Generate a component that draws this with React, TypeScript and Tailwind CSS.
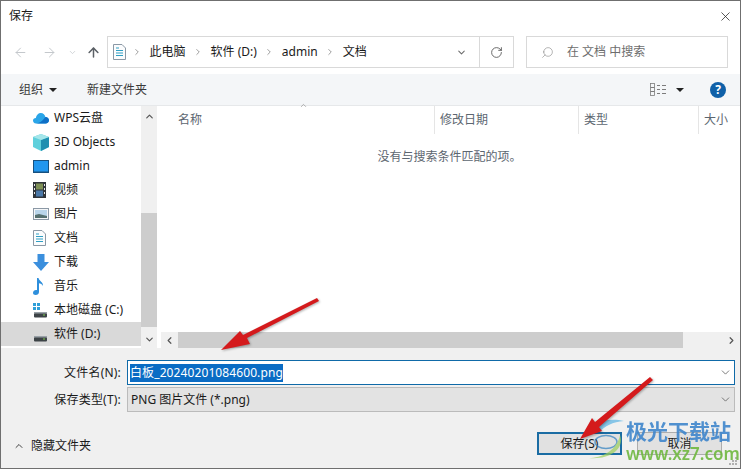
import { ArrowLeft, ArrowRight, ArrowUp, ChevronDown, ChevronLeft, ChevronRight, ChevronUp, RotateCw, Search, X } from "lucide-react";

const font = "font-['Noto_Sans','Noto_Sans_CJK_SC',sans-serif]";

function Cloud() {
  return (
    <svg width="16" height="12" viewBox="0 0 16 12">
      <path d="M3 11.5C1 11.5 0 10 0 8.500C0 7 1.200 6 2.800 6C3.300 3 5.300 1 7.800 1C10.300 1 12 2.800 12.400 5C14.500 5.200 16 6.500 16 8.300C16 10.300 14.500 11.500 12.500 11.500Z" fill="#2aa5e8" />
      <path d="M3 11.500C6 11.500 9 9.500 12.400 5C14.500 5.200 16 6.500 16 8.300C16 10.300 14.500 11.500 12.500 11.500Z" fill="#0f6fc6" />
    </svg>
  );
}

function Cube() {
  return (
    <svg width="16" height="17" viewBox="0 0 16 17">
      <path d="M8 0L16 3V13L8 17L0 13V3Z" fill="#5fd0dc" />
      <path d="M8 6L16 3V13L8 17Z" fill="#1f8fb0" />
      <path d="M8 0L16 3L8 6L0 3Z" fill="#a5e6ea" />
    </svg>
  );
}

function Desktop() {
  return (
    <svg width="16" height="13" viewBox="0 0 16 13">
      <rect x="0" y="0" width="16" height="13" fill="#17507f" />
      <rect x="1" y="1" width="14" height="10.500" fill="#2196ee" />
    </svg>
  );
}

function Film() {
  return (
    <svg width="13" height="16" viewBox="0 0 13 16">
      <rect width="13" height="16" fill="#30353a" />
      <rect x="3" y="1.500" width="7" height="6" fill="#7d8f55" />
      <rect x="3" y="8.500" width="7" height="6" fill="#4a78a8" />
      <path d="M1 2h1v2H1zM1 6h1v2H1zM1 10h1v2H1zM11 2h1v2h-1zM11 6h1v2h-1zM11 10h1v2h-1z" fill="#e8e8e8" />
    </svg>
  );
}

function Picture() {
  return (
    <svg width="16" height="12" viewBox="0 0 16 12">
      <rect x="0.500" y="0.500" width="15" height="11" fill="#f4f6f8" stroke="#8b98a5" />
      <rect x="2" y="2" width="12" height="8" fill="#b9d5ea" />
      <path d="M2 7L6 6L14 8V10H2Z" fill="#55706f" />
    </svg>
  );
}

function Doc() {
  return (
    <svg width="13" height="16" viewBox="0 0 13 16">
      <path d="M0.500 0.500H9L12.500 4V15.500H0.500Z" fill="#fbfcfd" stroke="#8a98a5" />
      <path d="M3 4H6M3 6.500H10M3 9H10M3 11.500H10" stroke="#2f9fc4" strokeWidth="1" />
    </svg>
  );
}

function Download() {
  return (
    <svg width="16" height="17" viewBox="0 0 16 17">
      <path d="M4.500 0H11.500V8H16L8 17L0 8H4.500Z" fill="#3b8fdd" />
    </svg>
  );
}

function Music() {
  return (
    <svg width="11" height="17" viewBox="0 0 11 17">
      <path d="M4 0H5.500C6 3 10.500 4 10 8C9 6 7.500 5.500 6 5.200V14C6 15.800 4.500 17 2.700 17C1 17 0 16 0 14.700C0 13.200 1.500 12 3 12C3.500 12 4 12.100 4 12.200Z" fill="#2e8fdc" />
    </svg>
  );
}

function Drive({ windows }: { windows?: boolean }) {
  return (
    <svg width="15" height="15" viewBox="0 0 15 15">
      {windows && <path d="M0 0h3v3H0zM4 0h3v3H4zM0 4h3v3H0zM4 4h3v3H4z" fill="#2f9fd8" />}
      <rect x="1" y="10" width="13" height="4.500" rx="1" fill="#3d4347" />
      <rect x="1" y="9" width="13" height="1.500" fill="#9aa2a8" />
      <rect x="10" y="11.500" width="2" height="1" fill="#7fd04f" />
    </svg>
  );
}

function Arrow({ d }: { d: string }) {
  return (
    <svg className="pointer-events-none absolute -left-px -top-px drop-shadow-[1px_1px_1px_rgba(0,0,0,0.3)]" width="741" height="469" viewBox="0 0 741 469">
      <path d={d} fill="#d41a1c" />
    </svg>
  );
}

const navItems = [
  { icon: <Cloud />, label: "WPS云盘" },
  { icon: <Cube />, label: "3D Objects" },
  { icon: <Desktop />, label: "admin" },
  { icon: <Film />, label: "视频" },
  { icon: <Picture />, label: "图片" },
  { icon: <Doc />, label: "文档" },
  { icon: <Download />, label: "下载" },
  { icon: <Music />, label: "音乐" },
  { icon: <Drive windows />, label: "本地磁盘 (C:)" },
  { icon: <Drive />, label: "软件 (D:)", active: true },
];

function Crumb({ label }: { label: string }) {
  return (
    <>
      <ChevronRight size={10} strokeWidth={2} className="mx-[6px] text-[#8a8a8a]" />
      <span className="px-[1.5px]">{label}</span>
    </>
  );
}

export default function App() {
  return (
    <div className={`relative flex h-[469px] w-[741px] flex-col overflow-hidden border border-[#6f6f6f] bg-white text-[12px] text-[#1a1a1a] ${font}`}>
      {/* title */}
      <div className="flex h-[29px] shrink-0 items-center justify-between pl-[8px] pr-[7px] pt-[1px]">
        <span>保存</span>
        <X size={15} strokeWidth={1.2} className="text-[#222]" />
      </div>

      {/* nav + address */}
      <div className="flex h-[44px] shrink-0 items-center pl-[12px] pr-[12px]">
        <ArrowLeft size={15} strokeWidth={1.6} className="text-[#c4c8cc]" />
        <ArrowRight size={15} strokeWidth={1.6} className="ml-[14px] text-[#c4c8cc]" />
        <ChevronDown size={9} strokeWidth={2} className="ml-[11px] text-[#c4c8cc]" />
        <ArrowUp size={15} strokeWidth={2.4} className="ml-[9px] text-[#5b6066]" />
        <div className="ml-[6px] flex h-[32px] w-[372px] items-center border border-r-0 border-[#d9d9d9] pl-[5px]">
          <Doc />
          <Crumb label="此电脑" />
          <Crumb label="软件 (D:)" />
          <Crumb label="admin" />
          <Crumb label="文档" />
          <ChevronDown size={11} strokeWidth={2.2} className="ml-auto mr-[12px] text-[#6a6a6a]" />
        </div>
        <div className="flex h-[32px] w-[35px] items-center justify-center border border-[#d9d9d9]">
          <RotateCw size={13} strokeWidth={1.6} className="text-[#555]" />
        </div>
        <div className="ml-[12px] flex h-[32px] w-[202px] items-center border border-[#d9d9d9] pl-[14px] text-[#6d6d6d]">
          <Search size={13} strokeWidth={1} className="-scale-x-100 text-[#777]" />
          <span className="ml-[13px]">在 文档 中搜索</span>
        </div>
      </div>

      {/* toolbar */}
      <div className="flex h-[32px] shrink-0 items-center border-b border-[#e6e8ea] bg-[#f4f6f8] pl-[18px] pr-[14px] text-[#3a3a3a]">
        <span>组织</span>
        <span className="ml-[6px] h-0 w-0 border-x-[4px] border-t-[4px] border-x-transparent border-t-[#222]" />
        <span className="ml-[30px]">新建文件夹</span>
        <svg className="ml-auto" width="16" height="13" viewBox="0 0 16 13" fill="none" stroke="#7c7c7c">
          <rect x="0.500" y="0.500" width="4" height="12" strokeWidth="0.800" />
          <path d="M0.500 4.500H4.500M0.500 8.500H4.500M7 2.500H10M12 2.500H16M7 6.500H10M12 6.500H16M7 10.500H10M12 10.500H16" strokeWidth="1" />
        </svg>
        <span className="ml-[10px] h-0 w-0 border-x-[4px] border-t-[4px] border-x-transparent border-t-[#222]" />
        <span className="ml-[26px] flex h-[16px] w-[16px] items-center justify-center rounded-full bg-[#0f60a8] text-[12px] font-bold leading-none text-white">?</span>
      </div>

      {/* browser */}
      <div className="flex h-[242px] shrink-0">
        <div className="flex w-[157px] shrink-0">
          <div className="w-[140px] shrink-0">
            {navItems.map((item) => (
              <div key={item.label} className={`flex h-[24px] items-center ${item.active ? "bg-[#d9d9d9]" : ""}`}>
                <span className="ml-[32px] flex w-[21px] shrink-0 items-center">{item.icon}</span>
                <span>{item.label}</span>
              </div>
            ))}
          </div>
          <div className="flex w-[16px] flex-col items-center bg-[#f0f0f0]">
            <ChevronUp size={11} strokeWidth={2.6} className="mt-[5px] shrink-0 text-[#555]" />
            <div className="mt-[91px] h-[114px] w-full bg-[#cdcdcd]" />
            <ChevronDown size={11} strokeWidth={2.6} className="mt-[7px] shrink-0 text-[#555]" />
          </div>
        </div>
        <div className="relative flex min-w-0 flex-1 flex-col pl-[3px]">
          <div className="flex h-[28px] shrink-0 items-center text-[#5c6670]">
            <div className="relative w-[273px] pl-[17px]">
              名称
              <ChevronUp size={9} strokeWidth={1.4} className="absolute left-[138px] top-[-10px] text-[#777]" />
            </div>
            <div className="flex h-[28px] w-[144px] items-center border-l border-[#e5e5e5] pl-[5px]">修改日期</div>
            <div className="flex h-[28px] w-[120px] items-center border-l border-[#e5e5e5] pl-[5px]">类型</div>
            <div className="flex h-[28px] flex-1 items-center border-l border-[#e5e5e5] pl-[5px]">大小</div>
          </div>
          <div className="mt-[14px] flex-1 pr-[2px] text-center text-[#5c6670]">没有与搜索条件匹配的项。</div>
          <div className="flex h-[16px] shrink-0 items-center bg-[#f0f0f0]">
            <ChevronLeft size={11} strokeWidth={2.6} className="ml-[3px] text-[#555]" />
            <div className="ml-[3px] h-full w-[505px] bg-[#cdcdcd]" />
            <ChevronRight size={11} strokeWidth={2.6} className="ml-auto mr-[3px] text-[#555]" />
          </div>
        </div>
      </div>

      {/* file name + buttons */}
      <div className="flex flex-1 flex-col bg-[#f0f0f0]">
        <div className="mt-[12px] flex items-center">
          <span className="w-[120px] text-right tracking-[0.2px]">文件名(N):</span>
          <div className="ml-[6px] flex h-[25px] w-[608px] items-center border border-[#0f6aa8] bg-white pl-[2px]">
            <span className="bg-[#0a6cc4] leading-[18px] tracking-[0.1px] text-white">白板_20240201084600.png</span>
            <ChevronDown size={13} strokeWidth={1.4} className="ml-auto mr-[2px] text-[#555]" />
          </div>
        </div>
        <div className="mt-[2px] flex items-center">
          <span className="w-[120px] text-right tracking-[0.2px]">保存类型(T):</span>
          <div className="ml-[6px] flex h-[25px] w-[608px] items-center border border-[#bbb] bg-[#e3e3e3] pl-[3px]">
            <span>PNG 图片文件 (*.png)</span>
            <ChevronDown size={13} strokeWidth={1.4} className="ml-auto mr-[2px] text-[#555]" />
          </div>
        </div>
        <div className="mt-[20px] flex pr-[18px]">
          <div className="mt-[4px] flex items-center">
            <ChevronUp size={12} strokeWidth={2} className="ml-[12px] text-[#444]" />
            <span className="ml-[6px]">隐藏文件夹</span>
          </div>
          <div className="ml-auto flex h-[23px] w-[85px] items-center justify-center border-2 border-[#1a6ca3] bg-[#e1e1e1]">保存(S)</div>
          <div className="ml-[15px] flex h-[23px] w-[85px] items-center justify-center border border-[#adadad] bg-[#e1e1e1]">取消</div>
        </div>
      </div>

      {/* size grip */}
      <svg className="absolute bottom-[2px] right-[2px]" width="9" height="9" viewBox="0 0 9 9" fill="#b0b0b0">
        <path d="M6 0h2v2H6zM3 3h2v2H3zM6 3h2v2H6zM0 6h2v2H0zM3 6h2v2H3zM6 6h2v2H6z" />
      </svg>

      {/* watermark */}
      <div className="pointer-events-none absolute left-[586px] top-[417px] flex items-start">
        <svg className="opacity-70" width="38" height="41" viewBox="0 0 38 41" fill="none">
          <path d="M6 7C16 1 28 1 37 3C26 4 17 8 13 14C11 11 9 9 6 7Z" fill="#5ab4e4" />
          <ellipse cx="19" cy="24" rx="11" ry="6.500" stroke="#2f7fbf" strokeWidth="1.500" />
          <path d="M2 40C14 40 30 33 33 17C38 30 24 42 2 40Z" fill="#9ccf5a" />
        </svg>
        <div className="ml-[1px] flex flex-col opacity-90">
          <span className="text-[21px] font-bold leading-[27px] text-[#3f86cc]">极光下载站</span>
          <span className="mt-[2px] text-[17px] font-semibold leading-[14px] text-[#6fb83f]">www.xz7.com</span>
        </div>
      </div>

      {/* annotation arrows */}
      <Arrow d="M317 298L319 301L247 338L250 344L221 350L240 331L243 335Z" />
      <Arrow d="M650 377L653 380L599 427L602 431L580 439L592 418L595 422Z" />
    </div>
  );
}
